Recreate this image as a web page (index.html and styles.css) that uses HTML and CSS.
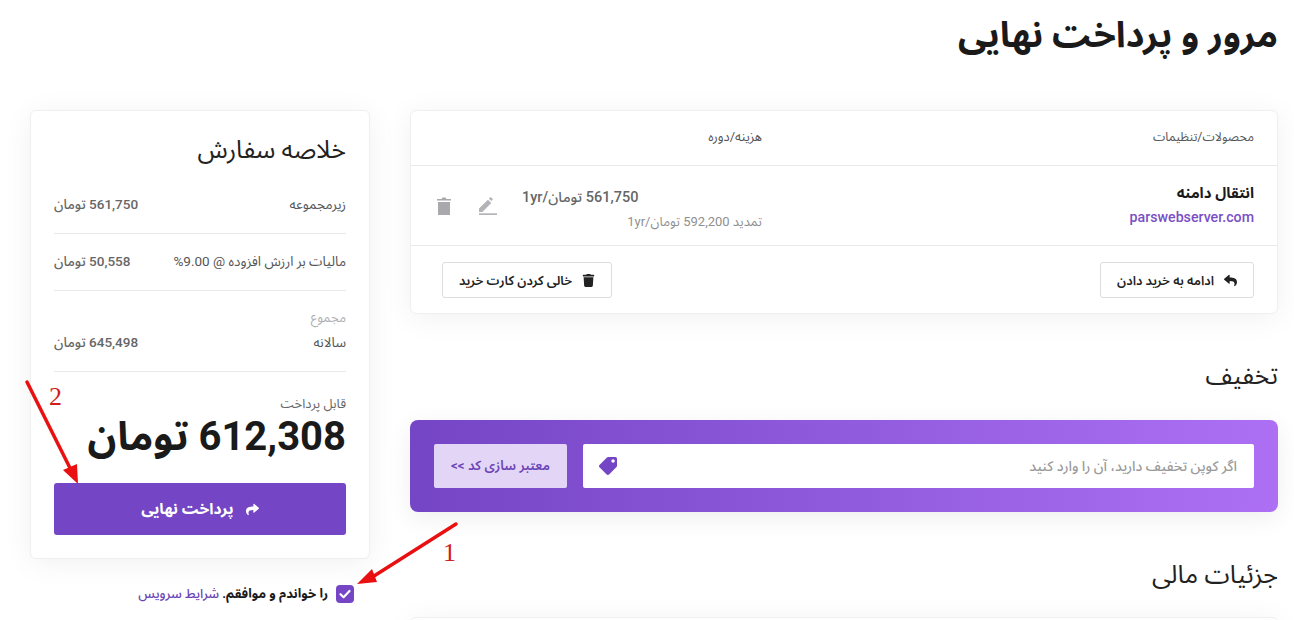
FILE: index.html
```html
<!DOCTYPE html>
<html lang="fa" dir="rtl">
<head>
<meta charset="utf-8">
<title>مرور و پرداخت نهایی</title>
<link rel="stylesheet" href="styles.css">
</head>
<body>
<div class="page">
  <h1 class="page-title">مرور و پرداخت نهایی</h1>
  <div class="columns">
    <main class="main-col">
      <section class="card cart">
        <div class="cart-head">
          <div class="col-product">محصولات/تنظیمات</div>
          <div class="col-cost">هزینه/دوره</div>
          <div class="col-actions"></div>
        </div>
        <div class="cart-item">
          <div class="col-product">
            <div class="product-name">انتقال دامنه</div>
            <a class="product-domain">parswebserver.com</a>
          </div>
          <div class="col-cost">
            <div class="price">561,750 تومان/1yr</div>
            <div class="renew">تمدید 592,200 تومان/1yr</div>
          </div>
          <div class="col-actions">
            <svg class="icon-edit" viewBox="0 0 18 18"><path d="M0 15v-3.4L8.9 2.7l3.4 3.4L3.4 15zM9.9 1.7 11 .6a1 1 0 0 1 1.4 0l1 1a1 1 0 0 1 0 1.4l-1.1 1.1z"/><rect x="0" y="16.3" width="18" height="1.7"/></svg>
            <svg class="icon-trash" viewBox="0 0 14 18"><path d="M1 5h12v13H1zM0 2h4.5l1-1.5h3L9.5 2H14v1.6H0z"/></svg>
          </div>
        </div>
        <div class="cart-foot">
          <button class="btn-outline"><svg class="icon-sm" viewBox="0 0 512 512"><path d="M8.309 189.836L184.313 37.851C199.719 24.546 224 35.347 224 56.015v80.053c160.629 1.839 288 34.032 288 186.258 0 61.441-39.581 122.309-83.333 154.132-13.653 9.931-33.111-2.533-28.077-18.631 45.344-145.012-21.507-183.51-176.59-185.742V360c0 20.7-24.3 31.453-39.687 18.164l-176.004-152c-11.071-9.562-11.086-26.753 0-36.328z"/></svg>ادامه به خرید دادن</button>
          <button class="btn-outline"><svg class="icon-sm" viewBox="0 0 448 512"><path d="M432 32H312l-9.4-18.7A24 24 0 0 0 281.1 0H166.8a23.72 23.72 0 0 0-21.4 13.3L136 32H16A16 16 0 0 0 0 48v32a16 16 0 0 0 16 16h416a16 16 0 0 0 16-16V48a16 16 0 0 0-16-16zM53.2 467a48 48 0 0 0 47.9 45h245.8a48 48 0 0 0 47.9-45L416 128H32z"/></svg>خالی کردن کارت خرید</button>
        </div>
      </section>

      <h2 class="section-title discount-title">تخفیف</h2>
      <section class="coupon">
        <div class="coupon-field">
          <input class="coupon-input" type="text" placeholder="اگر کوپن تخفیف دارید، آن را وارد کنید">
          <svg class="icon-tag" viewBox="0 0 512 512"><path transform="matrix(-1 0 0 1 512 0)" d="M0 252.118V48C0 21.49 21.49 0 48 0h204.118a48 48 0 0 1 33.941 14.059l211.882 211.882c18.745 18.745 18.745 49.137 0 67.882L293.823 497.941c-18.745 18.745-49.137 18.745-67.882 0L14.059 286.059A48 48 0 0 1 0 252.118zM112 64c-26.51 0-48 21.49-48 48s21.49 48 48 48 48-21.49 48-48-21.49-48-48-48z"/></svg>
        </div>
        <button class="btn-coupon">معتبر سازی کد &gt;&gt;</button>
      </section>

      <h2 class="section-title finance-title">جزئیات مالی</h2>
      <section class="card finance"></section>
    </main>

    <aside class="side-col">
      <section class="card summary">
        <h2 class="summary-title">خلاصه سفارش</h2>
        <div class="sum-row"><span>زیرمجموعه</span><span class="sum-value">561,750 تومان</span></div>
        <div class="sum-row"><span>مالیات بر ارزش افزوده @ 9.00%</span><span class="sum-value">50,558 تومان</span></div>
        <div class="sum-block">
          <div class="sum-muted">مجموع</div>
          <div class="sum-line"><span>سالانه</span><span class="sum-value">645,498 تومان</span></div>
        </div>
        <div class="pay-label">قابل پرداخت</div>
        <div class="pay-total">612,308 تومان</div>
        <button class="btn-pay"><svg class="icon-pay" viewBox="0 0 512 512"><path d="M503.691 189.836L327.687 37.851C312.281 24.546 288 35.347 288 56.015v80.053C127.371 137.907 0 170.1 0 322.326c0 61.441 39.581 122.309 83.333 154.132 13.653 9.931 33.111-2.533 28.077-18.631C66.066 312.814 132.917 274.316 288 272.085V360c0 20.7 24.3 31.453 39.687 18.164l176.004-152c11.071-9.562 11.086-26.753 0-36.328z"/></svg>پرداخت نهایی</button>
      </section>
      <label class="terms">
        <span class="checkbox"><svg viewBox="0 0 18 18"><path d="M4.5 9.2 7.6 12.2 13.5 6" fill="none" stroke="#fff" stroke-width="2.2" stroke-linecap="round" stroke-linejoin="round"/></svg></span>
        <span>را خواندم و موافقم. <a class="terms-link">شرایط سرویس</a></span>
      </label>
    </aside>
  </div>
</div>

<svg class="annotations" viewBox="0 0 1294 620">
  <line x1="27" y1="382" x2="70" y2="468" class="anno-line"/>
  <polygon points="78,484 63,470 77,464" class="anno-head"/>
  <line x1="456" y1="524" x2="374" y2="576" class="anno-line"/>
  <polygon points="357,584 372,569 377,582" class="anno-head"/>
  <text x="49" y="405" class="anno-num">2</text>
  <text x="443" y="561" class="anno-num">1</text>
</svg>
</body>
</html>
```
FILE: styles.css
```css
* { box-sizing: border-box; }
html, body { margin: 0; height: 620px; overflow: hidden; background: #fff; }
body {
  font-family: Roboto, "Noto Sans Arabic", "Noto Sans", "DejaVu Sans", sans-serif;
  color: #1a1a1a;
  position: relative;
}
.page { padding: 0 16px 0 30px; }
.page-title {
  margin: 0;
  height: 110px;
  padding-top: 11px;
  font-size: 36px;
  line-height: 48px;
  font-weight: 700;
  color: #1a1a1a;
}
.columns { display: flex; gap: 40px; align-items: flex-start; }
.main-col { width: 868px; flex: none; }
.side-col { width: 340px; flex: none; }
.card {
  background: #fff;
  border: 1px solid #efefef;
  border-radius: 6px;
  box-shadow: 0 4px 30px rgba(0, 0, 0, .06);
}

/* cart */
.cart-head, .cart-item { display: flex; padding: 0 23px 0 25px; border-bottom: 1px solid #e9e9e9; }
.cart-head { height: 55px; align-items: center; padding-bottom: 2px; font-size: 12.4px; color: #555; }
.cart-head .col-cost { font-size: 13px; }
.cart-item { height: 80px; padding-top: 16px; }
.col-product { flex: 1; }
.col-cost { width: 240px; margin-left: 25px; }
.col-actions { width: 61px; display: flex; justify-content: space-between; align-items: flex-start; padding-top: 15px; }
.product-name { font-size: 15px; font-weight: 700; line-height: 22px; color: #1a1a1a; }
.product-domain { display: block; margin-top: 3px; font-size: 14.2px; font-weight: 500; line-height: 20px; color: #7b4fc4; text-align: right; }
.price { font-size: 14.5px; font-weight: 500; line-height: 30px; padding-top: 1px; color: #666; text-align: left; }
.renew { font-size: 13px; line-height: 17px; color: #909090; }
.icon-edit { width: 18px; height: 18px; fill: #b4b4b8; display: block; }
.icon-trash { width: 14px; height: 18px; fill: #a8a8ad; display: block; margin-left: 1px; }
.cart-foot { display: flex; justify-content: space-between; padding: 16px 23px 15px 31px; height: 67px; }
.btn-outline {
  display: flex; align-items: center; gap: 10px;
  height: 36px; padding: 0 16px;
  background: #fff;
  border: 1px solid #ddd;
  border-radius: 3px;
  font: 600 12.8px Roboto, "Noto Sans Arabic", "Noto Sans", "DejaVu Sans", sans-serif;
  color: #222;
}
.icon-sm { width: 13px; height: 13px; fill: #222; flex: none; }

/* sections */
.section-title { margin: 0; font-size: 25px; font-weight: 400; line-height: 36px; color: #222; }
.discount-title { margin-top: 44px; margin-bottom: 26px; }
.finance-title { margin-top: 44px; margin-bottom: 25px; font-size: 25.5px; }
.finance { height: 100px; }

/* coupon */
.coupon {
  display: flex; gap: 16px; height: 92px; padding: 24px;
  border-radius: 8px;
  background: linear-gradient(90deg, #7445c5 0%, #ad70f5 100%);
  box-shadow: 0 6px 24px rgba(0, 0, 0, .07);
}
.coupon-field { flex: 1; position: relative; }
.coupon-input {
  width: 100%; height: 44px;
  border: 0; border-radius: 2px;
  padding: 0 17px;
  background: #fff;
  font: 500 14px Roboto, "Noto Sans Arabic", "Noto Sans", "DejaVu Sans", sans-serif;
  outline: none;
}
.coupon-input::placeholder { color: #9a9a9a; opacity: 1; }
.icon-tag { position: absolute; left: 16px; top: 13px; width: 18px; height: 18px; fill: #7445c5; }
.btn-coupon {
  width: 133px; height: 44px; flex: none;
  border: 0; border-radius: 2px;
  background: #e3d5f6;
  color: #6b45b5;
  font: 600 13.3px Roboto, "Noto Sans Arabic", "Noto Sans", "DejaVu Sans", sans-serif;
}

/* summary */
.summary { height: 449px; padding: 23px 23px 0 23px; }
.summary-title { margin: 0 0 11px; font-size: 25px; font-weight: 400; line-height: 32px; color: #222; }
.sum-row, .sum-line { display: flex; justify-content: space-between; font-size: 13.5px; line-height: 18px; color: #555; }
.sum-row { padding: 18px 0 20px; border-bottom: 1px solid #e9e9e9; }
.sum-value { font-weight: 500; font-size: 13.5px; color: #666; }
.sum-block { padding: 18px 0 20px; border-bottom: 1px solid #e9e9e9; }
.sum-muted { font-size: 13px; line-height: 18px; color: #b0b0b0; margin-bottom: 6px; }
.pay-label { margin-top: 23px; font-size: 13px; line-height: 18px; color: #666; }
.pay-total { font-size: 40px; font-weight: 700; line-height: 48px; color: #1a1a1a; }
.btn-pay {
  display: flex; align-items: center; justify-content: center; gap: 12px;
  width: 100%; height: 52px; margin-top: 22px;
  border: 0; border-radius: 3px;
  background: #7445c5; color: #fff;
  font: 700 15.5px Roboto, "Noto Sans Arabic", "Noto Sans", "DejaVu Sans", sans-serif;
}
.icon-pay { width: 13px; height: 13px; fill: #fff; flex: none; }

/* terms */
.terms { display: flex; align-items: center; gap: 8px; margin-top: 26px; padding-right: 16px; height: 18px; font-size: 13px; font-weight: 700; color: #1a1a1a; }
.checkbox { width: 18px; height: 18px; border-radius: 4px; background: #7445c5; flex: none; }
.checkbox svg { display: block; width: 18px; height: 18px; }
.terms-link { color: #6b45b5; font-weight: 500; }

/* annotations drawn over the page */
.annotations { position: absolute; left: 0; top: 0; width: 1294px; height: 620px; pointer-events: none; direction: ltr; }
.anno-line { stroke: #e81010; stroke-width: 3.5; stroke-linecap: round; }
.anno-head { fill: #e81010; }
.anno-num { font-family: "Liberation Serif", serif; font-size: 26px; fill: #d41c1c; }
```
